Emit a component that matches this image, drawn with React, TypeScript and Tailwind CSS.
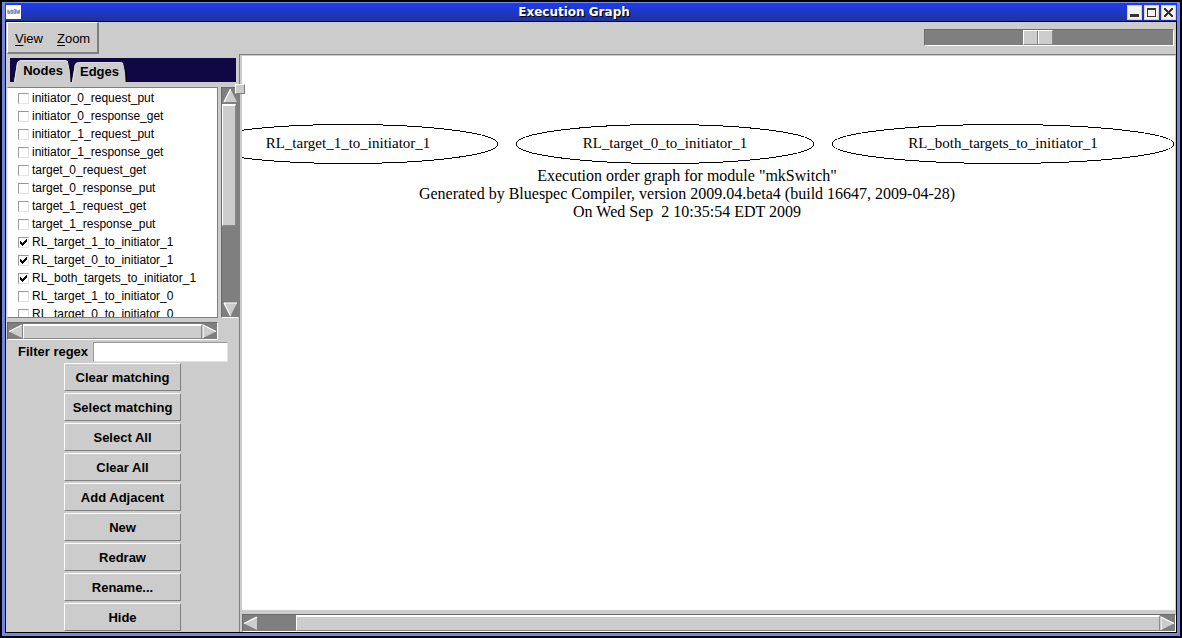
import { useState } from 'react';
import type { ReactNode } from 'react';

const NODES = [
  { name: 'initiator_0_request_put', on: false },
  { name: 'initiator_0_response_get', on: false },
  { name: 'initiator_1_request_put', on: false },
  { name: 'initiator_1_response_get', on: false },
  { name: 'target_0_request_get', on: false },
  { name: 'target_0_response_put', on: false },
  { name: 'target_1_request_get', on: false },
  { name: 'target_1_response_put', on: false },
  { name: 'RL_target_1_to_initiator_1', on: true },
  { name: 'RL_target_0_to_initiator_1', on: true },
  { name: 'RL_both_targets_to_initiator_1', on: true },
  { name: 'RL_target_1_to_initiator_0', on: false },
  { name: 'RL_target_0_to_initiator_0', on: false },
];

const ACTIONS = [
  'Clear matching',
  'Select matching',
  'Select All',
  'Clear All',
  'Add Adjacent',
  'New',
  'Redraw',
  'Rename...',
  'Hide',
];

const GRAPH = [
  { name: 'RL_target_1_to_initiator_1', cx: 106, rx: 150 },
  { name: 'RL_target_0_to_initiator_1', cx: 423, rx: 149 },
  { name: 'RL_both_targets_to_initiator_1', cx: 761, rx: 171 },
];

const CAPTION = [
  'Execution order graph for module "mkSwitch"',
  'Generated by Bluespec Compiler, version 2009.04.beta4 (build 16647, 2009-04-28)',
  'On Wed Sep\u00a0 2 10:35:54 EDT 2009',
];

function WindowButton({ label, children }: { label: string; children: ReactNode }) {
  return (
    <button
      type="button"
      aria-label={label}
      className="flex size-[15px] items-center justify-center border border-[#d8d4cc] bg-[#f4f2ee]"
    >
      <svg width="13" height="13" viewBox="0 0 13 13" fill="#35332f" shapeRendering="crispEdges" className="shrink-0">
        {children}
      </svg>
    </button>
  );
}

function TitleBar() {
  return (
    <header className="flex h-5 items-center border-t border-b border-t-[#7b8cf0] border-b-black bg-linear-to-b from-[#1c3cf0] to-[#21329a] px-px">
      <svg width="15" height="14" viewBox="0 0 15 14" aria-hidden="true">
        <rect width="15" height="14" fill="#fff" />
        <rect x="1" y="5" width="13" height="4" fill="#d3d3e8" />
        <path
          d="M2 4.500v4h1.500v-2h-1.500M5 5v3.500h1.500V5zM8 4.500v4h1.500v-4zM10.500 4.500l.7 4 .9-3 .9 3 .7-4"
          fill="none"
          stroke="#7a7aae"
          strokeWidth=".8"
        />
      </svg>
      <h1 className="flex-1 text-center font-['DejaVu_Sans',sans-serif] text-[12px] leading-[18px] font-bold text-white [text-shadow:1px_1px_1px_#000]">
        Execution Graph
      </h1>
      <div className="flex justify-end gap-0.5">
        <WindowButton label="Minimize">
          <rect x="2" y="8" width="9" height="3" />
        </WindowButton>
        <WindowButton label="Maximize">
          <path fillRule="evenodd" d="M2 2h9v9H2zM3 4v6h7V4z" />
        </WindowButton>
        <WindowButton label="Close">
          <path d="M2 2h2v1h1v1h1v1h1V4h1V3h1V2h2v2h-1v1H9v1H8v1h1v1h1v1h1v2H9v-1H8V9H7V8H6v1H5v1H4v1H2V9h1V8h1V7h1V6H4V5H3V4H2z" />
        </WindowButton>
      </div>
    </header>
  );
}

function MenuBar() {
  return (
    <div className="flex h-8 items-start justify-between px-px">
      <nav className="flex h-8 items-center gap-3.5 border-t border-r-2 border-b-2 border-l border-t-white border-r-[#7f7f7f] border-b-[#7f7f7f] border-l-white pt-0.5 pr-[7px] pl-[7px] font-['Liberation_Sans',Arial,sans-serif] text-[13px]">
        <button type="button">
          <span className="underline underline-offset-2">V</span>iew
        </button>
        <button type="button">
          <span className="underline underline-offset-2">Z</span>oom
        </button>
      </nav>
      <input
        type="range"
        aria-label="Zoom level"
        min={0}
        max={100}
        defaultValue={45}
        className="mt-[7px] mr-px h-[17px] w-[250px] appearance-none border border-t-[#6b6b6b] border-r-white border-b-white border-l-[#6b6b6b] bg-[#7f7f7f] [&::-webkit-slider-thumb]:h-[15px] [&::-webkit-slider-thumb]:w-[30px] [&::-webkit-slider-thumb]:appearance-none [&::-webkit-slider-thumb]:border [&::-webkit-slider-thumb]:border-t-white [&::-webkit-slider-thumb]:border-r-[#8a8a8a] [&::-webkit-slider-thumb]:border-b-[#8a8a8a] [&::-webkit-slider-thumb]:border-l-white [&::-webkit-slider-thumb]:bg-[linear-gradient(90deg,#cccccc_13px,#7f7f7f_13px,#7f7f7f_14px,#ffffff_14px,#ffffff_15px,#cccccc_15px)]"
      />
    </div>
  );
}

function Tabs({ tab, onTab }: { tab: string; onTab: (t: string) => void }) {
  return (
    <div role="tablist" className="mr-[3px] ml-1 flex h-6 items-end bg-[#100844] pl-1 font-['Liberation_Sans',Arial,sans-serif] text-[13px] font-bold">
      {['Nodes', 'Edges'].map((t) => {
        const active = tab === t;
        return (
          <button
            key={t}
            type="button"
            role="tab"
            aria-selected={active}
            onClick={() => onTab(t)}
            className={
              active
                ? 'relative grid h-[22px] w-[58px] place-items-center'
                : 'relative grid h-5 w-[55px] place-items-center'
            }
          >
            <svg
              viewBox="0 0 58 22"
              preserveAspectRatio="none"
              className="absolute inset-0 size-full"
              aria-hidden="true"
            >
              <path d="M0 22 L3 3 Q4 .5 7 .5 H51 Q54 .5 55 3 L57 22z" fill="#ccc" />
              <path d="M.5 22 L3.500 3 Q4.500 .5 7 .5 H51 Q53 .5 54 2" fill="none" stroke="#e8e8e8" />
              <path d="M54.500 2 L57 12 V22" fill="none" stroke="#000" />
            </svg>
            <span className="relative">{t}</span>
          </button>
        );
      })}
    </div>
  );
}

function Arrow({ dir }: { dir: 'up' | 'down' | 'left' | 'right' }) {
  const turn = { up: 0, right: 90, down: 180, left: 270 }[dir];
  const light = {
    up: 'M7.500 1L1 14',
    down: 'M1 1H14M1 1L7.500 14',
    left: 'M1 7.500L14 1',
    right: 'M1 14V1L14 7.500',
  }[dir];
  return (
    <button type="button" aria-label={'Scroll ' + dir} className="block size-[15px] shrink-0">
      <svg width="15" height="15" viewBox="0 0 15 15">
        <path d="M7.500 1L14 14H1z" fill="#ccc" transform={`rotate(${turn} 7.5 7.5)`} />
        <path d={light} fill="none" stroke="#fff" strokeWidth="1.200" />
      </svg>
    </button>
  );
}

const THUMB = 'border-t-2 border-l border-r border-b border-t-white border-l-white border-r-[#8a8a8a] border-b-[#8a8a8a] bg-[#ccc]';

function NodeList() {
  const [on, setOn] = useState(NODES.map((n) => n.on));
  return (
    <div className="grid grid-cols-[1fr_18px] gap-x-[3px] gap-y-1 pl-px">
      <ul className="h-[231px] overflow-hidden border border-t-[#7f7f7f] border-r-[#7f7f7f] border-b-[#7f7f7f] border-l-[#e8e8e8] bg-white pt-px pl-2.5 font-['Liberation_Sans',Arial,sans-serif] text-[12px]">
        {NODES.map((n, i) => (
          <li key={n.name} className="h-[18px]">
            <label className="flex h-[18px] items-center gap-[3px] whitespace-nowrap">
              <span className="grid size-[11px] shrink-0">
                <input
                  type="checkbox"
                  checked={on[i]}
                  onChange={() => setOn(on.map((v, j) => (j === i ? !v : v)))}
                  className="peer col-start-1 row-start-1 size-[11px] appearance-none border border-t-[#999] border-r-[#e4e4e4] border-b-[#e4e4e4] border-l-[#999] bg-white"
                />
                <svg
                  viewBox="0 0 11 11"
                  fill="#000"
                  shapeRendering="crispEdges"
                  className="pointer-events-none invisible col-start-1 row-start-1 size-[11px] peer-checked:visible"
                >
                  <path d="M2 4h1v1h1v1h1V5h1V4h1V3h1V2h1v3H8v1H7v1H6v1H5v1H4V8H3V7H2z" />
                </svg>
              </span>
              {n.name}
            </label>
          </li>
        ))}
      </ul>
      <div className="flex flex-col items-center border border-t-[#6b6b6b] border-r-[#7f7f7f] border-b-white border-l-[#6b6b6b] bg-[#7f7f7f]">
        <Arrow dir="up" />
        <div className={'mt-px h-[122px] w-[14px] self-start ' + THUMB} />
        <div className="flex-1" />
        <Arrow dir="down" />
      </div>
      <div className="flex h-[18px] items-center border border-t-[#6b6b6b] border-r-white border-b-white border-l-[#6b6b6b] bg-[#7f7f7f]">
        <Arrow dir="left" />
        <div className={'h-[15px] flex-1 ' + THUMB} />
        <Arrow dir="right" />
      </div>
    </div>
  );
}

function SidePanel() {
  const [tab, setTab] = useState('Nodes');
  return (
    <aside className="relative flex w-[234px] shrink-0 flex-col border-r border-[#7f7f7f] pt-1">
      <Tabs tab={tab} onTab={setTab} />
      <div className="pt-[5px]">
        <NodeList />
      </div>
      <div className="flex h-[23px] items-center gap-[5px] pl-3 font-['Liberation_Sans',Arial,sans-serif] text-[13px] font-bold">
        <label htmlFor="regex" className="w-[70px] whitespace-nowrap">
          Filter regex
        </label>
        <input
          id="regex"
          type="text"
          className="h-5 w-[135px] border border-t-[#999] border-r-[#e4e4e4] border-b-[#e4e4e4] border-l-[#999] bg-white px-1 font-normal"
        />
      </div>
      <div className="flex flex-col items-center gap-0.5">
        {ACTIONS.map((a) => (
          <button
            key={a}
            type="button"
            className="h-7 w-[117px] border border-t-white border-r-[#7f7f7f] border-b-[#7f7f7f] border-l-white bg-[#ccc] pt-0.5 font-['Liberation_Sans',Arial,sans-serif] text-[13px] font-bold"
          >
            {a}
          </button>
        ))}
      </div>
      <div className="absolute top-[30px] -right-1.5 z-10 size-2.5 cursor-col-resize border border-t-white border-r-[#7f7f7f] border-b-[#7f7f7f] border-l-white bg-[#ccc]" />
    </aside>
  );
}

function GraphView() {
  return (
    <main className="flex min-w-0 flex-1 flex-col border-t border-[#7f7f7f]">
      <div className="min-h-0 flex-1 overflow-hidden border-t border-r border-b border-l-2 border-[#ccc] bg-white">
        <svg
          width="933"
          height="200"
          className="font-['Liberation_Serif','Times_New_Roman',serif]"
          textAnchor="middle"
        >
          {GRAPH.map((g) => (
            <g key={g.name}>
              <ellipse cx={g.cx} cy="88" rx={g.rx} ry="19.500" fill="none" stroke="#000" shapeRendering="crispEdges" />
              <text x={g.cx} y="92" className="text-[15px]">
                {g.name}
              </text>
            </g>
          ))}
          {CAPTION.map((line, i) => (
            <text key={line} x="445" y={125 + i * 18} className="text-[16px]">
              {line}
            </text>
          ))}
        </svg>
      </div>
      <div className="mt-[3px] ml-0.5 flex h-[18px] items-center border border-t-[#6b6b6b] border-r-white border-b-white border-l-[#6b6b6b] bg-[#7f7f7f]">
        <Arrow dir="left" />
        <div className="w-[38px]" />
        <div className={'h-4 flex-1 ' + THUMB} />
        <Arrow dir="right" />
      </div>
    </main>
  );
}

export default function App() {
  return (
    <div className="h-screen min-h-[638px] bg-black p-0.5 text-black">
      <div className="flex h-full flex-col border-x-[3px] border-b-[3px] border-[#7286e2]">
        <TitleBar />
        <div className="flex min-h-0 flex-1 flex-col border-x border-b border-black bg-[#ccc]">
          <MenuBar />
          <div className="flex min-h-0 flex-1">
            <SidePanel />
            <GraphView />
          </div>
        </div>
      </div>
    </div>
  );
}
